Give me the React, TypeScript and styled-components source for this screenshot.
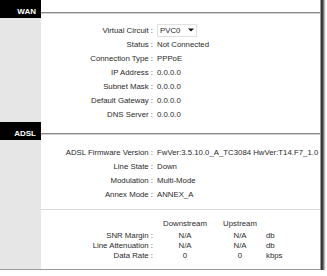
import React from "react";
import styled, { createGlobalStyle } from "styled-components";

const GlobalStyle = createGlobalStyle`
  html, body {
    margin: 0;
    padding: 0;
    background: #fff;
  }
  body {
    font-family: "Liberation Sans", Arial, sans-serif;
    font-size: 7.8px;
    color: #2a2a2a;
  }
`;

//style
const Frame = styled.div`
  box-sizing: border-box;
  width: 321px;
  margin-top: -5px;
  background: #fff;
  border-right: 1px solid #9a9a9a;
  border-bottom: 1px solid #9a9a9a;
  box-shadow: 3px 3px 2px rgba(0, 0, 0, 0.8);
  display: flex;
  flex-direction: column;
`;

const SectionHeader = styled.div<{ $tall?: boolean }>`
  display: flex;
  height: ${({ $tall }) => ($tall ? "23px" : "18px")};
`;

const Tag = styled.div`
  width: 41px;
  box-sizing: border-box;
  background: #000;
  color: #fff;
  font-weight: 700;
  font-size: 8px;
  padding-right: 5px;
  padding-bottom: 2px;
  display: flex;
  align-items: flex-end;
  justify-content: flex-end;
`;

const Rule = styled.div<{ $top: number }>`
  flex: 1;
  margin-top: ${({ $top }) => `${$top}px`};
  height: 1px;
  background: #8a8a8a;
  border-bottom: 1px solid #d0d0d0;
`;

const SectionBody = styled.div`
  display: flex;
`;

const Side = styled.div`
  width: 41px;
  flex-shrink: 0;
  background: #e6e6e6;
`;

const Main = styled.div`
  flex: 1;
  display: flex;
  flex-direction: column;
`;

const InfoList = styled.div<{ $pb?: number }>`
  padding-top: 5px;
  padding-bottom: ${({ $pb }) => `${$pb ?? 0}px`};
`;

const InfoRow = styled.div`
  display: grid;
  grid-template-columns: 112px 1fr;
  column-gap: 4px;
  height: 14px;
  align-items: center;
  white-space: nowrap;
`;

const Label = styled.div`
  text-align: right;
`;

const Value = styled.div``;

const Select = styled.div`
  display: inline-flex;
  align-items: center;
  box-sizing: border-box;
  width: 40px;
  height: 13px;
  padding-left: 2px;
  border: 1px solid #e0e0e0;
  gap: 8px;
`;

const Divider = styled.div`
  margin-top: 8px;
  height: 1px;
  background: #dcdcdc;
`;

const Stats = styled.div`
  padding-top: 9px;
  padding-bottom: 8px;
  display: grid;
  grid-template-columns: 112px 58px 46px 1fr;
  column-gap: 3px;
  grid-auto-rows: 10px;
  grid-template-rows: 12px;
  align-items: start;
  white-space: nowrap;
`;

const Cell = styled.div<{ $align?: "left" | "center" | "right" }>`
  text-align: ${({ $align }) => $align ?? "center"};
  line-height: 10px;
`;

const ArrowIcon = () => (
  <svg width="6" height="4" viewBox="0 0 6 4">
    <path d="M0 0.5h6L3 3.5z" fill="#111" />
  </svg>
);

const wanRows: [string, string][] = [
  ["Status", "Not Connected"],
  ["Connection Type", "PPPoE"],
  ["IP Address", "0.0.0.0"],
  ["Subnet Mask", "0.0.0.0"],
  ["Default Gateway", "0.0.0.0"],
  ["DNS Server", "0.0.0.0"],
];

const adslRows: [string, string][] = [
  ["ADSL Firmware Version", "FwVer:3.5.10.0_A_TC3084 HwVer:T14.F7_1.0"],
  ["Line State", "Down"],
  ["Modulation", "Multi-Mode"],
  ["Annex Mode", "ANNEX_A"],
];

const stats: [string, string, string, string][] = [
  ["SNR Margin", "N/A", "N/A", "db"],
  ["Line Attenuation", "N/A", "N/A", "db"],
  ["Data Rate", "0", "0", "kbps"],
];

export default function App() {
  return (
    <>
      <GlobalStyle />
      <Frame>
        <SectionHeader $tall>
          <Tag>WAN</Tag>
          <Rule $top={17} />
        </SectionHeader>
        <SectionBody>
          <Side />
          <Main>
            <InfoList $pb={1}>
              <InfoRow>
                <Label>Virtual Circuit :</Label>
                <Value>
                  <Select>
                    PVC0
                    <ArrowIcon />
                  </Select>
                </Value>
              </InfoRow>
              {wanRows.map(([k, v]) => (
                <InfoRow key={k}>
                  <Label>{k} :</Label>
                  <Value>{v}</Value>
                </InfoRow>
              ))}
            </InfoList>
          </Main>
        </SectionBody>

        <SectionHeader>
          <Tag>ADSL</Tag>
          <Rule $top={11} />
        </SectionHeader>
        <SectionBody>
          <Side />
          <Main>
            <InfoList>
              {adslRows.map(([k, v]) => (
                <InfoRow key={k}>
                  <Label>{k} :</Label>
                  <Value>{v}</Value>
                </InfoRow>
              ))}
            </InfoList>
            <Divider />
            <Stats>
              <Cell />
              <Cell>Downstream</Cell>
              <Cell>Upstream</Cell>
              <Cell />
              {stats.map(([k, d, u, unit]) => (
                <React.Fragment key={k}>
                  <Cell $align="right">{k} :</Cell>
                  <Cell>{d}</Cell>
                  <Cell>{u}</Cell>
                  <Cell $align="left">{unit}</Cell>
                </React.Fragment>
              ))}
            </Stats>
          </Main>
        </SectionBody>
      </Frame>
    </>
  );
}
